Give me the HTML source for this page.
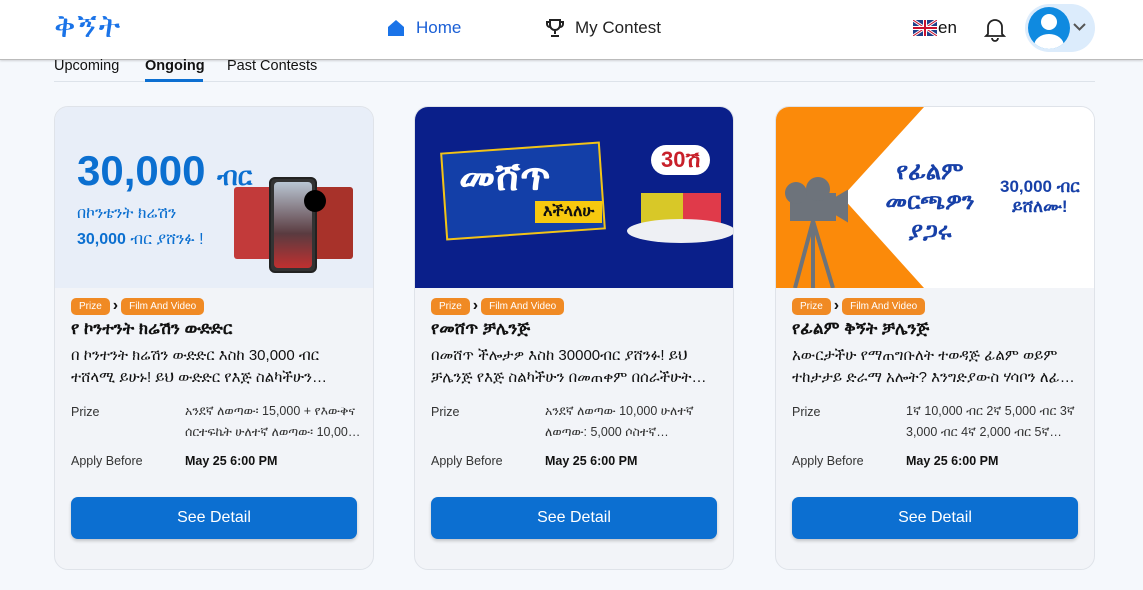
<!DOCTYPE html>
<html><head><meta charset="utf-8"><style>
*{box-sizing:border-box;margin:0;padding:0}
body{width:1143px;height:590px;overflow:hidden;background:#f5f8fc;font-family:"Liberation Sans","Noto Sans CJK SC",sans-serif;color:#111;position:relative}
.hdr{position:absolute;left:0;top:0;width:1143px;height:60px;background:#fff;border-bottom:1px solid #bbb;box-shadow:0 1px 2px rgba(0,0,0,.15)}
.logo{position:absolute;left:54px;top:8px;font-size:32px;color:#1a73e8;letter-spacing:2px}
.nav{position:absolute;top:18px;font-size:17px;display:flex;align-items:center;gap:10px}
.tabs{position:absolute;left:54px;top:58px;width:1041px;height:24px;border-bottom:1px solid #dde3ea;font-size:14.5px}
.tabs span{position:absolute;top:0}
.card{position:absolute;top:106px;width:320px;height:464px;background:#f2f4f8;border:1px solid #dfe3e9;border-radius:14px;overflow:hidden}
.img{height:181px;position:relative;overflow:hidden}
.tags{position:absolute;left:16px;top:190px;display:flex;align-items:center;gap:3px}
.tag{background:#f08a24;color:#fff;font-size:10px;border-radius:5px;padding:3px 8px}
.t{position:absolute;left:16px;top:212px;font-size:17px;font-weight:bold;white-space:nowrap}
.d{position:absolute;left:16px;top:238px;width:292px;font-size:15px;line-height:22px;height:44px;overflow:hidden;display:-webkit-box;-webkit-line-clamp:2;-webkit-box-orient:vertical}
.lab{position:absolute;left:16px;font-size:12.5px;color:#333}
.val{position:absolute;left:130px;width:180px;font-size:12.5px;line-height:21px;color:#333;max-height:42px;overflow:hidden;display:-webkit-box;-webkit-line-clamp:2;-webkit-box-orient:vertical}
.btn{position:absolute;left:16px;top:390px;width:286px;height:42px;background:#0c6fd1;color:#fff;border-radius:7px;font-size:16px;text-align:center;line-height:42px;box-shadow:0 2px 3px rgba(0,0,0,.2)}
</style></head><body>
<div class="hdr">
<div class="logo">ቅኝት</div>
<div class="nav" style="left:386px;color:#1a5fd6"><svg width="20" height="20" viewBox="0 0 20 20"><path d="M2 9L10 2l8 7v9H2z" fill="#1a73e8"/></svg><span>Home</span></div>
<div class="nav" style="left:545px;color:#222"><svg width="20" height="20" viewBox="0 0 20 20" fill="none" stroke="#222" stroke-width="2"><path d="M5 2h10v5a5 5 0 0 1-10 0zM10 12v4M6 18h8M5 4H2v2a3 3 0 0 0 3 3M15 4h3v2a3 3 0 0 1-3 3"/></svg><span>My Contest</span></div>
<div style="position:absolute;left:913px;top:20px;width:24px;height:16px;background:#1f3f8a;overflow:hidden"><svg width="24" height="16"><path d="M0 0L24 16M24 0L0 16" stroke="#fff" stroke-width="3"/><path d="M0 0L24 16M24 0L0 16" stroke="#c8102e" stroke-width="1"/><rect x="10" y="0" width="4" height="16" fill="#fff"/><rect x="0" y="6" width="24" height="4" fill="#fff"/><rect x="11" y="0" width="2" height="16" fill="#c8102e"/><rect x="0" y="7" width="24" height="2" fill="#c8102e"/></svg></div>
<div style="position:absolute;left:938px;top:18px;font-size:17px">en</div>
<svg style="position:absolute;left:984px;top:16px" width="22" height="26" viewBox="0 0 22 26" fill="none" stroke="#222" stroke-width="1.8"><path d="M4 18V11a7 7 0 0 1 14 0v7l2 2H2z"/><path d="M8 22a3 3 0 0 0 6 0"/></svg>
<div style="position:absolute;left:1025px;top:4px;width:70px;height:48px;border-radius:24px;background:#dcecfc"></div>
<div style="position:absolute;left:1028px;top:7px;width:42px;height:42px;border-radius:50%;background:#0f8ae0;overflow:hidden"><div style="position:absolute;left:13px;top:7px;width:16px;height:16px;border-radius:50%;background:#fff"></div><div style="position:absolute;left:6px;top:27px;width:30px;height:24px;border-radius:50%;background:#fff"></div></div>
<svg style="position:absolute;left:1073px;top:23px" width="13" height="9"><path d="M1 1l5.5 5.5L12 1" stroke="#555" stroke-width="2" fill="none"/></svg>
</div>
<div class="tabs"><span style="left:0">Upcoming</span><span style="left:91px;font-weight:bold">Ongoing</span><div style="position:absolute;left:91px;top:21px;width:58px;height:3px;background:#0c6fd1"></div><span style="left:173px">Past Contests</span></div>

<div class="card" style="left:54px">
<div class="img" style="background:#e8eef8">
<div style="position:absolute;left:22px;top:40px;font-size:42px;font-weight:bold;color:#0b6fd0">30,000 <span style="font-size:26px">ብር</span></div>
<div style="position:absolute;left:22px;top:94px;font-size:16px;color:#0b6fd0;line-height:26px">በኮንቴንት ክሬሽን<br><b>30,000</b> ብር ያሸንፉ !</div>
<div style="position:absolute;left:179px;top:80px;width:38px;height:72px;background:#c23a3a;border-radius:3px"></div>
<div style="position:absolute;left:258px;top:80px;width:40px;height:72px;background:#a8322a;border-radius:3px"></div>
<div style="position:absolute;left:214px;top:70px;width:48px;height:96px;background:#333;border-radius:6px;border:2px solid #222"><div style="margin:3px;height:86px;background:linear-gradient(#b9c6d3,#5a3b40 60%,#c03030);border-radius:4px"></div></div>
<div style="position:absolute;left:249px;top:83px;width:22px;height:22px;border-radius:50%;background:#000"></div>
</div>
<div class="tags"><span class="tag">Prize</span><b>›</b><span class="tag">Film And Video</span></div>
<div class="t">የ ኮንተንት ክሬሽን ውድድር</div>
<div class="d">በ ኮንተንት ክሬሽን ውድድር እስከ 30,000 ብር ተሸላሚ ይሁኑ! ይህ ውድድር የእጅ ስልካችሁን ተጠቅማችሁ ከ 2…</div>
<div class="lab" style="top:298px">Prize</div><div class="val" style="top:294px">አንደኛ ለወጣው፡ 15,000 + የእውቅና ሰርተፍኬት ሁለተኛ ለወጣው፡ 10,000 …</div>
<div class="lab" style="top:347px">Apply Before</div><div class="val" style="top:344px;font-weight:bold;color:#111">May 25 6:00 PM</div>
<div class="btn">See Detail</div>
</div>

<div class="card" style="left:414px">
<div class="img" style="background:#0a1f8a">
<div style="position:absolute;left:28px;top:40px;width:160px;height:88px;background:#133fa8;border:2px solid #f3c316;transform:rotate(-4deg)"></div>
<div style="position:absolute;left:44px;top:48px;font-size:40px;color:#fff;font-weight:bold">መሸጥ</div>
<div style="position:absolute;left:120px;top:94px;background:#f7c90f;padding:2px 8px;font-size:16px;font-weight:bold">እችላለሁ</div>
<div style="position:absolute;left:236px;top:38px;background:#fff;border-radius:16px;padding:2px 10px;font-size:22px;color:#c8202a;font-weight:bold">30ሽ</div>
<div style="position:absolute;left:226px;top:86px;width:46px;height:36px;background:#d8c828"></div>
<div style="position:absolute;left:268px;top:86px;width:38px;height:36px;background:#e03a4a"></div>
<div style="position:absolute;left:212px;top:112px;width:108px;height:24px;border-radius:50%;background:#eef0f4"></div>
</div>
<div class="tags"><span class="tag">Prize</span><b>›</b><span class="tag">Film And Video</span></div>
<div class="t">የመሸጥ ቻሌንጅ</div>
<div class="d">በመሸጥ ችሎታዎ እስከ 30000ብር ያሸንፉ! ይህ ቻሌንጅ የእጅ ስልካችሁን በመጠቀም በሰራችሁት የመሸጥ…</div>
<div class="lab" style="top:298px">Prize</div><div class="val" style="top:294px">አንደኛ ለወጣው 10,000 ሁለተኛ ለወጣው: 5,000 ሶስተኛ…</div>
<div class="lab" style="top:347px">Apply Before</div><div class="val" style="top:344px;font-weight:bold;color:#111">May 25 6:00 PM</div>
<div class="btn">See Detail</div>
</div>

<div class="card" style="left:775px">
<div class="img" style="background:#fff">
<svg style="position:absolute;left:0;top:0" width="150" height="181"><path d="M0 0H148L66 90L148 181H0z" fill="#fb8a0a"/><rect x="14" y="86" width="46" height="28" fill="#6d737b"/><circle cx="20" cy="86" r="11" fill="#6d737b"/><circle cx="42" cy="82" r="12" fill="#6d737b"/><path d="M60 92l10-6v26l-10-6zM37 114l-18 67M37 114l20 67M37 114v67" stroke="#6d737b" stroke-width="4" fill="#6d737b"/></svg>
<div style="position:absolute;left:92px;top:50px;width:124px;text-align:center;font-size:24px;font-weight:bold;color:#1740a8;line-height:30px">የፊልም መርጫዎን ያጋሩ</div>
<div style="position:absolute;left:224px;top:70px;font-size:17px;font-weight:bold;color:#1740a8;text-align:center;line-height:20px">30,000 ብር<br>ይሸለሙ!</div>
</div>
<div class="tags"><span class="tag">Prize</span><b>›</b><span class="tag">Film And Video</span></div>
<div class="t">የፊልም ቅኝት ቻሌንጅ</div>
<div class="d">አውርታችሁ የማጠግቡለት ተወዳጅ ፊልም ወይም ተከታታይ ድራማ አሎት? እንግድያውስ ሃሳቦን ለፊልም አድናቂዎች…</div>
<div class="lab" style="top:298px">Prize</div><div class="val" style="top:294px">1ኛ 10,000 ብር 2ኛ 5,000 ብር 3ኛ 3,000 ብር 4ኛ 2,000 ብር 5ኛ…</div>
<div class="lab" style="top:347px">Apply Before</div><div class="val" style="top:344px;font-weight:bold;color:#111">May 25 6:00 PM</div>
<div class="btn">See Detail</div>
</div>
</body></html>
